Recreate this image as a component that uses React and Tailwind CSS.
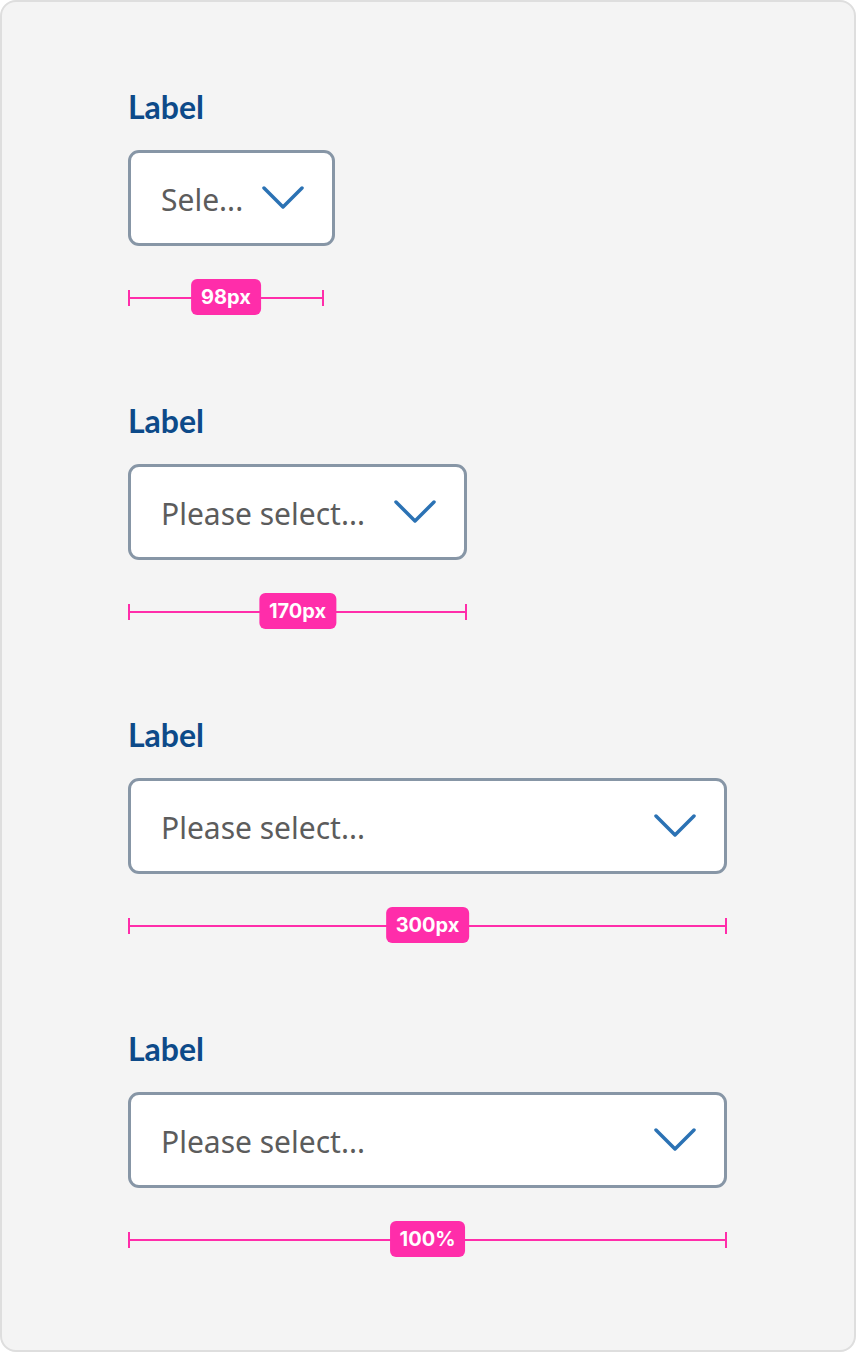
const ITEMS = [
  { text: 'Sele...', box: 'w-[207px]', line: 'w-[196px]', badge: '98px' },
  { text: 'Please select...', box: 'w-[339px]', line: 'w-[339px]', badge: '170px' },
  { text: 'Please select...', box: 'w-[599px]', line: 'w-[599px]', badge: '300px' },
  { text: 'Please select...', box: 'w-[599px]', line: 'w-[599px]', badge: '100%' },
]

function Chevron() {
  return (
    <svg width="42" height="24" viewBox="0 0 42 24" fill="none" className="shrink-0">
      <path d="M2 2 L21 21 L40 2" stroke="#2b72b4" strokeWidth="3.5" strokeLinecap="round" strokeLinejoin="round" />
    </svg>
  )
}

function Measure({ width, label }) {
  return (
    <div className={`relative flex h-[36px] items-center pt-[2px] ${width}`}>
      <div className="h-[16px] w-[2px] bg-[#ff2daa]" />
      <div className="h-[2px] flex-1 bg-[#ff2daa]" />
      <div className="h-[16px] w-[2px] bg-[#ff2daa]" />
      <span className="absolute left-1/2 top-0 flex h-[36px] -translate-x-1/2 items-center rounded-[6px] bg-[#ff2daa] px-[10px] font-['Inter',sans-serif] text-[20px] font-bold text-white">
        {label}
      </span>
    </div>
  )
}

export default function App() {
  return (
    <div className="h-[1352px] w-[856px] rounded-[16px] border-2 border-[#dedede] bg-[#f4f4f4] pl-[126px] pt-[86px]">
      {ITEMS.map((item, i) => (
        <section key={i} className="flex flex-col pb-[87px]">
          <label className="h-[40px] font-['Lato',sans-serif] text-[32px] font-bold leading-[38px] text-[#0d4a89]">
            Label
          </label>
          <div
            className={`mt-[22px] flex h-[96px] items-center justify-between rounded-[11px] border-[3px] border-[#8796a6] bg-white pl-[30px] pr-[28px] ${item.box}`}
          >
            <span className="whitespace-nowrap pt-[2px] font-['Noto_Sans',sans-serif] text-[30px] text-[#5c5c5c]">
              {item.text}
            </span>
            <Chevron />
          </div>
          <div className="mt-[33px]">
            <Measure width={item.line} label={item.badge} />
          </div>
        </section>
      ))}
    </div>
  )
}
